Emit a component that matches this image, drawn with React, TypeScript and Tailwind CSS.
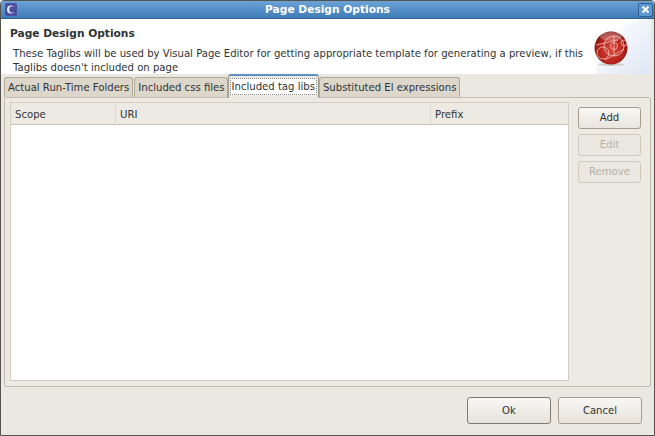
const font = { fontFamily: '"DejaVu Sans", sans-serif' };

function SideButton({ label, disabled }: { label: string; disabled?: boolean }) {
  return (
    <button
      className={
        disabled
          ? "h-[22px] w-[63px] rounded-[3px] border border-[#cfc9bd] bg-[#ebe8e1] text-[10.1px] text-[#b5b1a8]"
          : "h-[22px] w-[63px] rounded-[3px] border border-[#a49d8f] bg-gradient-to-b from-[#f8f7f4] to-[#e9e5de] text-[10.1px] text-[#2e3436]"
      }
    >
      {label}
    </button>
  );
}

function FooterButton({ label, strong }: { label: string; strong?: boolean }) {
  return (
    <button
      className={`h-[27px] w-[84px] rounded-[3px] border bg-gradient-to-b from-[#f8f7f4] to-[#e7e3dc] text-[10.1px] text-[#2e3436] ${
        strong ? "border-[#7f7a6f]" : "border-[#a49d8f]"
      }`}
    >
      {label}
    </button>
  );
}

function Tab({ label, active, className = "" }: { label: string; active?: boolean; className?: string }) {
  if (active) {
    return (
      <div className="z-10 -mb-px flex h-[24px] items-center rounded-t-[3px] border border-b-0 border-[#a49d8f] border-t-2 border-t-[#5f93c8] bg-[#edeae3] pb-[2px] pl-[1px] pr-[1px]">
        <span className="border border-dotted border-[#8a8a8a] bg-white px-[1px] leading-[15px]">{label}</span>
      </div>
    );
  }
  return (
    <div className={`flex h-[20px] items-center rounded-t-[3px] border border-b-0 border-[#b0a898] bg-[#dcd6cb] pl-[3px] ${className}`}>
      {label}
    </div>
  );
}

function Sphere() {
  return (
    <svg width="36" height="36" viewBox="0 0 36 36">
      <defs>
        <radialGradient id="ball" cx="0.5" cy="0.55" r="0.55">
          <stop offset="0" stopColor="#d9483c" />
          <stop offset="0.7" stopColor="#b8231c" />
          <stop offset="1" stopColor="#7a120e" />
        </radialGradient>
      </defs>
      <ellipse cx="18" cy="33.5" rx="13" ry="1.5" fill="#cfccc6" />
      <circle cx="18" cy="17" r="16.5" fill="url(#ball)" />
      <ellipse cx="18" cy="5.5" rx="11" ry="4.5" fill="#ffffff" fillOpacity="0.28" />
      <g fill="none" stroke="#f6d3cc" strokeWidth="0.8" strokeOpacity="0.9">
        <circle cx="21" cy="15" r="10" />
        <circle cx="21" cy="15" r="3.5" />
        <circle cx="10" cy="22" r="6" />
        <circle cx="31" cy="12" r="3" />
        <path d="M3 14 L25 9 M12 29 L31 18 M21 5 L21 25" />
      </g>
    </svg>
  );
}

export default function App() {
  return (
    <div
      style={font}
      className="flex h-[436px] w-[655px] flex-col overflow-hidden rounded-t-[4px] border border-[#55534e] bg-[#ebe8e1] text-[10.1px] text-[#2e3436]"
    >
      <div className="flex h-[18px] shrink-0 items-center justify-between border-b border-[#2f5f8f] bg-gradient-to-b from-[#6ba3d6] to-[#3f7cb8] pl-[4px] pr-[1px]">
        <svg width="12" height="13" viewBox="0 0 12 13">
          <rect width="12" height="13" rx="2" fill="#4a4fa0" />
          <circle cx="6" cy="6.5" r="4" fill="#e8e8f4" />
          <circle cx="7.5" cy="6.5" r="3.2" fill="#4a4fa0" />
        </svg>
        <span className="text-[10.65px] font-bold text-white">Page Design Options</span>
        <div className="flex h-[14px] w-[15px] items-center justify-center rounded-[2px] border border-[#2f5f8f] bg-[#5f98cf]">
          <svg width="9" height="9" viewBox="0 0 9 9">
            <path d="M1.5 1.5 L7.5 7.5 M7.5 1.5 L1.5 7.5" stroke="#fff" strokeWidth="2" />
          </svg>
        </div>
      </div>

      <div className="relative mr-[3px] flex h-[55px] shrink-0 overflow-hidden bg-white pl-[9px] pt-[8px]">
        <div className="w-[590px]">
          <div className="text-[10.65px] font-bold leading-[14px]">Page Design Options</div>
          <div className="mt-[6px] pl-[3px] leading-[14px]">
            These Taglibs will be used by Visual Page Editor for getting appropriate template for generating a preview, if this
            Taglibs doesn't included on page
          </div>
        </div>
        <div className="absolute right-0 top-0 h-[55px] w-[55px] rounded-tl-[55px] bg-gradient-to-br from-white via-[#f0f4fa] to-[#dde6f4]" />
        <div className="absolute right-[22px] top-[12px]">
          <Sphere />
        </div>
      </div>

      <div className="flex h-[23px] shrink-0 items-end pl-[3px]">
        <Tab label="Actual Run-Time Folders" className="pr-[3px]" />
        <Tab label="Included css files" className="ml-[1px] pr-[2px]" />
        <Tab label="Included tag libs" active />
        <Tab label="Substituted El expressions" className="pr-[3px]" />
      </div>

      <div className="ml-[3px] mr-[3px] flex h-[290px] shrink-0 gap-[9px] rounded-[2px] border border-[#c4bdae] bg-[#edeae3] pb-[5px] pl-[5px] pr-[8px] pt-[4px]">
        <div className="flex w-[559px] flex-col border border-[#d3cec3] bg-white">
          <div className="flex h-[22px] shrink-0 items-center border-b border-[#c9c3b6] bg-[#edeae3] leading-none">
            <div className="w-[105px] border-r border-[#dcd7cc] pb-[2px] pl-[4px] pt-[6px]">Scope</div>
            <div className="w-[315px] border-r border-[#dcd7cc] pb-[2px] pl-[4px] pt-[6px]">URI</div>
            <div className="pb-[2px] pl-[4px] pt-[6px]">Prefix</div>
          </div>
        </div>
        <div className="flex flex-col gap-[5px] pt-[5px]">
          <SideButton label="Add" />
          <SideButton label="Edit" disabled />
          <SideButton label="Remove" disabled />
        </div>
      </div>

      <div className="flex flex-1 items-start justify-end gap-[7px] pr-[12px] pt-[10px]">
        <FooterButton label="Ok" strong />
        <FooterButton label="Cancel" />
      </div>
    </div>
  );
}
